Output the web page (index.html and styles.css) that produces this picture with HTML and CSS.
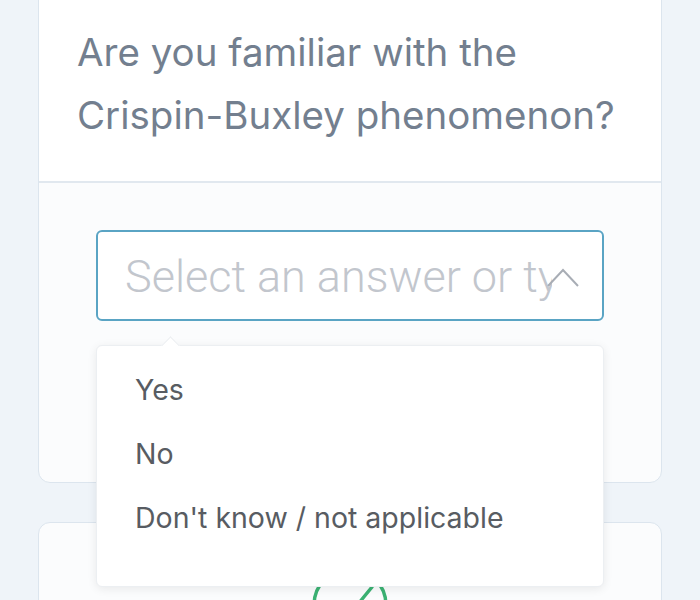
FILE: index.html
```html
<!DOCTYPE html>
<html lang="en">
<head>
    <meta charset="UTF-8">
    <meta name="viewport" content="width=device-width, initial-scale=1.0">
    <title>Survey</title>
    <link rel="stylesheet" href="styles.css">
</head>
<body>

    <div class="survey">
        <div class="card question-card">
            <div class="card-header">
                <h2 class="question">Are you familiar with the Crispin-Buxley phenomenon?</h2>
            </div>
            <div class="card-body">
                <div class="select-wrap">
                    <div class="select-box">
                        <span class="placeholder">Select an answer or type</span>
                        <svg class="chevron" width="34" height="24" viewBox="0 0 34 24">
                            <path d="M2 21 L17 5 L32 21" fill="none" stroke="#a8adb5" stroke-width="2"/>
                        </svg>
                    </div>
                    <div class="dropdown">
                        <div class="option">Yes</div>
                        <div class="option">No</div>
                        <div class="option">Don't know / not applicable</div>
                    </div>
                </div>
            </div>
        </div>

        <div class="card next-card">
            <svg class="done-icon" width="80" height="80" viewBox="0 0 80 80">
                <circle cx="40" cy="40" r="36" fill="none" stroke="#3bb273" stroke-width="3.5"/>
                <path d="M22 42 L35 55 L62 22" fill="none" stroke="#3bb273" stroke-width="3.5" stroke-linecap="round" stroke-linejoin="round"/>
            </svg>
        </div>
    </div>

</body>
</html>
```

FILE: styles.css
```css
body {
    font-family: Inter, 'Liberation Sans', sans-serif;
    background-color: #eff4f9;
    margin: 0;
    padding: 0;
    overflow: hidden;
}
.survey {
    padding: 0 38px;
    display: flex;
    flex-direction: column;
    gap: 39px;
}
.card {
    background-color: #fbfcfd;
    border: 1px solid #dce5ee;
    border-radius: 12px;
}
.question-card {
    margin-top: -14px;
}
.card-header {
    background-color: white;
    border-bottom: 2px solid #e1e8ef;
    border-radius: 12px 12px 0 0;
    padding: 34px 38px 34px;
}
.question {
    margin: 0;
    font-size: 38.5px;
    font-weight: normal;
    line-height: 63px;
    color: #737f8f;
}
.card-body {
    padding: 47px 57px 161px;
}
.select-wrap {
    position: relative;
}
.select-box {
    height: 87px;
    border: 2px solid #5aa4c4;
    border-radius: 6px;
    background-color: white;
    display: flex;
    align-items: center;
    padding: 0 22px 0 27px;
}
.placeholder {
    flex: 1;
    overflow: hidden;
    white-space: nowrap;
    font-family: Roboto, sans-serif;
    font-weight: 300;
    font-size: 45px;
    color: #c2c6cd;
    margin-top: 2px;
}
.chevron {
    flex-shrink: 0;
    margin-left: -6px;
    margin-top: 2px;
}
.dropdown {
    position: absolute;
    top: 115px;
    left: 0;
    width: 508px;
    height: 242px;
    background-color: white;
    border: 1px solid #eceff2;
    border-radius: 6px;
    box-shadow: 0 2px 10px rgba(0, 0, 0, 0.08);
    padding-top: 12px;
    box-sizing: border-box;
}
.dropdown::before {
    content: '';
    position: absolute;
    top: -7px;
    left: 67px;
    width: 12px;
    height: 12px;
    background-color: white;
    border-top: 1px solid #eceff2;
    border-left: 1px solid #eceff2;
    transform: rotate(45deg);
}
.option {
    font-size: 28.5px;
    line-height: 64px;
    color: #585c62;
    padding-left: 38px;
}
.next-card {
    height: 200px;
    display: flex;
    justify-content: center;
    padding-top: 42px;
    box-sizing: border-box;
}
```
